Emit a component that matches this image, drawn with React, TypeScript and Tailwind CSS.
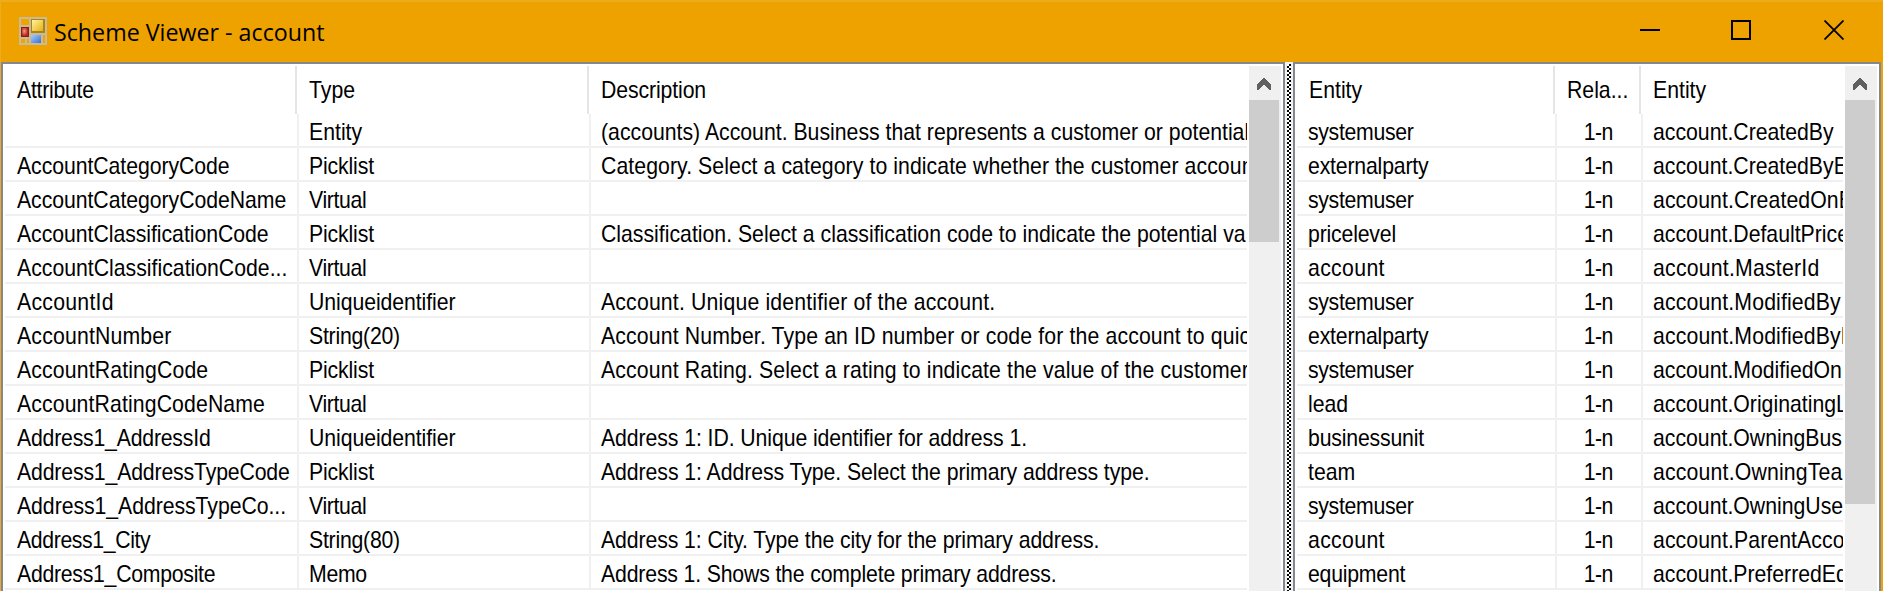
import React from "react";

type Align = "left" | "center";

const attributes: [string, string, string][] = [
  ["", "Entity", "(accounts) Account. Business that represents a customer or potential"],
  ["AccountCategoryCode", "Picklist", "Category. Select a category to indicate whether the customer accoun"],
  ["AccountCategoryCodeName", "Virtual", ""],
  ["AccountClassificationCode", "Picklist", "Classification. Select a classification code to indicate the potential va"],
  ["AccountClassificationCode...", "Virtual", ""],
  ["AccountId", "Uniqueidentifier", "Account. Unique identifier of the account."],
  ["AccountNumber", "String(20)", "Account Number. Type an ID number or code for the account to quic"],
  ["AccountRatingCode", "Picklist", "Account Rating. Select a rating to indicate the value of the customer"],
  ["AccountRatingCodeName", "Virtual", ""],
  ["Address1_AddressId", "Uniqueidentifier", "Address 1: ID. Unique identifier for address 1."],
  ["Address1_AddressTypeCode", "Picklist", "Address 1: Address Type. Select the primary address type."],
  ["Address1_AddressTypeCo...", "Virtual", ""],
  ["Address1_City", "String(80)", "Address 1: City. Type the city for the primary address."],
  ["Address1_Composite", "Memo", "Address 1. Shows the complete primary address."],
];

const relations: [string, string, string][] = [
  ["systemuser", "1-n", "account.CreatedBy"],
  ["externalparty", "1-n", "account.CreatedByE"],
  ["systemuser", "1-n", "account.CreatedOnB"],
  ["pricelevel", "1-n", "account.DefaultPrice"],
  ["account", "1-n", "account.MasterId"],
  ["systemuser", "1-n", "account.ModifiedBy"],
  ["externalparty", "1-n", "account.ModifiedByE"],
  ["systemuser", "1-n", "account.ModifiedOn"],
  ["lead", "1-n", "account.OriginatingL"],
  ["businessunit", "1-n", "account.OwningBus"],
  ["team", "1-n", "account.OwningTea"],
  ["systemuser", "1-n", "account.OwningUse"],
  ["account", "1-n", "account.ParentAcco"],
  ["equipment", "1-n", "account.PreferredEq"],
];

// Letter spacing of the labels whose width differs from the font's own.
const tracking: Record<string, string> = {
  Attribute: "tracking-[-0.3px]",
  Description: "tracking-[-0.12px]",
  AccountCategoryCode: "tracking-[-0.07px]",
  AccountCategoryCodeName: "tracking-[-0.06px]",
  AccountClassificationCode: "tracking-[-0.05px]",
  AccountId: "tracking-[0.3px]",
  AccountNumber: "tracking-[0.2px]",
  AccountRatingCode: "tracking-[0.16px]",
  AccountRatingCodeName: "tracking-[0.13px]",
  Address1_AddressId: "tracking-[-0.23px]",
  Address1_AddressTypeCode: "tracking-[-0.17px]",
  "Address1_AddressTypeCo...": "tracking-[-0.06px]",
  Address1_City: "tracking-[-0.42px]",
  Address1_Composite: "tracking-[-0.3px]",
  Uniqueidentifier: "tracking-[-0.08px]",
  Picklist: "tracking-[-0.17px]",
  Virtual: "tracking-[-0.39px]",
  "String(20)": "tracking-[-0.27px]",
  "String(80)": "tracking-[-0.27px]",
  Memo: "tracking-[-0.34px]",
  [attributes[1][2]]: "tracking-[0.08px]",
  [attributes[5][2]]: "tracking-[0.19px]",
  [attributes[6][2]]: "tracking-[0.15px]",
  [attributes[7][2]]: "tracking-[0.15px]",
  [attributes[9][2]]: "tracking-[-0.09px]",
  [attributes[10][2]]: "tracking-[-0.07px]",
  [attributes[12][2]]: "tracking-[-0.1px]",
  [attributes[13][2]]: "tracking-[-0.18px]",
  systemuser: "tracking-[-0.35px]",
  externalparty: "tracking-[-0.2px]",
  pricelevel: "tracking-[-0.2px]",
  account: "tracking-[0.39px]",
  businessunit: "tracking-[-0.2px]",
  equipment: "tracking-[-0.25px]",
  "1-n": "tracking-[-0.7px]",
  "account.CreatedOnB": "tracking-[0.1px]",
  "account.MasterId": "tracking-[0.25px]",
  "account.ModifiedBy": "tracking-[0.15px]",
  "account.ModifiedByE": "tracking-[0.15px]",
  "account.OwningTea": "tracking-[0.2px]",
  "account.ParentAcco": "tracking-[0.1px]",
};

function Label({ text, align = "left" }: { text: string; align?: Align }) {
  return (
    <span
      className={`block whitespace-pre scale-x-[0.885] ${align === "center" ? "origin-center" : "origin-left"} ${
        tracking[text] ?? ""
      }`}
    >
      {text}
    </span>
  );
}

function HeadCell({ text, className }: { text: string; className: string }) {
  return (
    <div className={`flex h-12 shrink-0 items-center overflow-hidden ${className}`}>
      <Label text={text} />
    </div>
  );
}

function Cell({ text, className, align }: { text: string; className: string; align?: Align }) {
  return (
    <div
      className={`flex h-[34px] shrink-0 items-center overflow-hidden border-b-2 border-[#f0f0f0] pt-1 ${
        align === "center" ? "justify-center" : ""
      } ${className}`}
    >
      {text && <Label text={text} align={align} />}
    </div>
  );
}

function ScrollBar({ thumb }: { thumb: string }) {
  return (
    <div className="ml-0.5 flex w-8 shrink-0 flex-col bg-[#f0f0f0]">
      <div className="flex h-[34px] w-[30px] shrink-0 items-center justify-center pt-0.5">
        <svg width="14" height="12" viewBox="0 0 14 12" shapeRendering="crispEdges">
          <path d="M0 7 L6 0 H8 L14 7 V12 H12 L7 6 L2 12 H0 Z" fill="#606060" />
        </svg>
      </div>
      <div className={`w-[30px] shrink-0 bg-[#cdcdcd] ${thumb}`} />
    </div>
  );
}

function AppIcon() {
  return (
    <svg width="28" height="28" viewBox="0 0 28 28">
      <defs>
        <linearGradient id="gold" x1="0" y1="0" x2="1" y2="1">
          <stop offset="0" stopColor="#fff2a0" />
          <stop offset="1" stopColor="#e8b010" />
        </linearGradient>
        <linearGradient id="blue" x1="0" y1="0" x2="1" y2="1">
          <stop offset="0" stopColor="#a8ccff" />
          <stop offset="1" stopColor="#3470d8" />
        </linearGradient>
        <radialGradient id="red" cx="0.4" cy="0.4" r="0.6">
          <stop offset="0" stopColor="#f09a80" />
          <stop offset="1" stopColor="#b82218" />
        </radialGradient>
      </defs>
      <rect width="28" height="28" fill="#c9bb95" />
      <rect x="2" y="2" width="8" height="6" fill="#eea500" />
      <rect x="2" y="22" width="4" height="4" fill="#eea500" />
      <rect x="8" y="22" width="2" height="4" fill="#eea500" />
      <rect x="24" y="18" width="2" height="8" fill="#eea500" />
      <rect x="12" y="2" width="14" height="14" fill="#a88518" />
      <rect x="13" y="3" width="11" height="11" fill="url(#gold)" />
      <rect x="2" y="10" width="8" height="10" fill="#8e1c14" />
      <rect x="3" y="11" width="6" height="8" fill="url(#red)" />
      <rect x="12" y="18" width="10" height="8" fill="url(#blue)" />
    </svg>
  );
}

export default function App() {
  return (
    <div className="flex h-[591px] w-[1883px] flex-col overflow-hidden border-l border-t-2 border-[#eeab1d] bg-[#eea200] font-['Liberation_Sans',Arial,sans-serif] text-[24px] leading-none text-black">
      <header className="flex h-[60px] shrink-0 items-center">
        <div className="ml-[18px] mb-[3px]">
          <AppIcon />
        </div>
        <h1 className="ml-[7px] origin-left scale-x-[0.968] whitespace-pre font-['Open_Sans','Noto_Sans',sans-serif] text-[24px] font-normal">
          Scheme Viewer - account
        </h1>
        <div className="ml-auto mr-[39px] mb-1 flex items-center">
          <svg width="20" height="20" viewBox="0 0 20 20" className="mr-[71px]">
            <path d="M0 10H20" stroke="#000" strokeWidth="2" />
          </svg>
          <svg width="20" height="20" viewBox="0 0 20 20" className="mr-[73px]">
            <rect x="1" y="1" width="18" height="18" fill="none" stroke="#000" strokeWidth="2" />
          </svg>
          <svg width="20" height="20" viewBox="0 0 20 20">
            <path d="M0.5 0.5L19.5 19.5M19.5 0.5L0.5 19.5" stroke="#000" strokeWidth="1.8" />
          </svg>
        </div>
      </header>

      <main className="flex min-h-0 flex-1">
        <section className="flex w-[1284px] shrink-0 border-2 border-b-0 border-[#828790] bg-white pt-0.5 pl-0.5">
          <div className="w-[1242px] shrink-0 overflow-hidden">
            <div className="flex">
              <HeadCell text="Attribute" className="w-[292px] border-r-2 border-[#e5e5e5] pl-3" />
              <HeadCell text="Type" className="w-[292px] border-r-2 border-[#e5e5e5] pl-3" />
              <HeadCell text="Description" className="w-[658px] pl-3" />
            </div>
            {attributes.map(([name, type, description], i) => (
              <div key={i} className="flex">
                <Cell text={name} className="w-[294px] border-r-2 pl-3" />
                <Cell text={type} className="w-[292px] border-r-2 pl-2.5" />
                <Cell text={description} className="w-[656px] pl-2.5" />
              </div>
            ))}
          </div>
          <ScrollBar thumb="h-[142px]" />
        </section>

        <div className="w-2 shrink-0 bg-[#f0f0f0] px-0.5 pt-0.5">
          <div className="h-full bg-[conic-gradient(#000_25%,#fff_0_50%,#000_0_75%,#fff_0)] bg-[size:4px_4px]" />
        </div>

        <section className="flex w-[588px] shrink-0 border-2 border-b-0 border-[#828790] bg-white pt-0.5 pl-0.5">
          <div className="w-[546px] shrink-0 overflow-hidden">
            <div className="flex">
              <HeadCell text="Entity" className="w-[258px] border-r-2 border-[#e5e5e5] pl-3" />
              <HeadCell text="Rela..." className="w-[86px] border-r-2 border-[#e5e5e5] pl-3" />
              <HeadCell text="Entity" className="w-[202px] pl-3" />
            </div>
            {relations.map(([entity, kind, target], i) => (
              <div key={i} className="flex">
                <Cell text={entity} className="w-[260px] border-r-2 pl-[11px]" />
                <Cell text={kind} align="center" className="w-[86px] border-r-2 pr-0.5" />
                <Cell text={target} className="w-[200px] pl-2.5" />
              </div>
            ))}
          </div>
          <ScrollBar thumb="h-[404px]" />
        </section>
      </main>
    </div>
  );
}
